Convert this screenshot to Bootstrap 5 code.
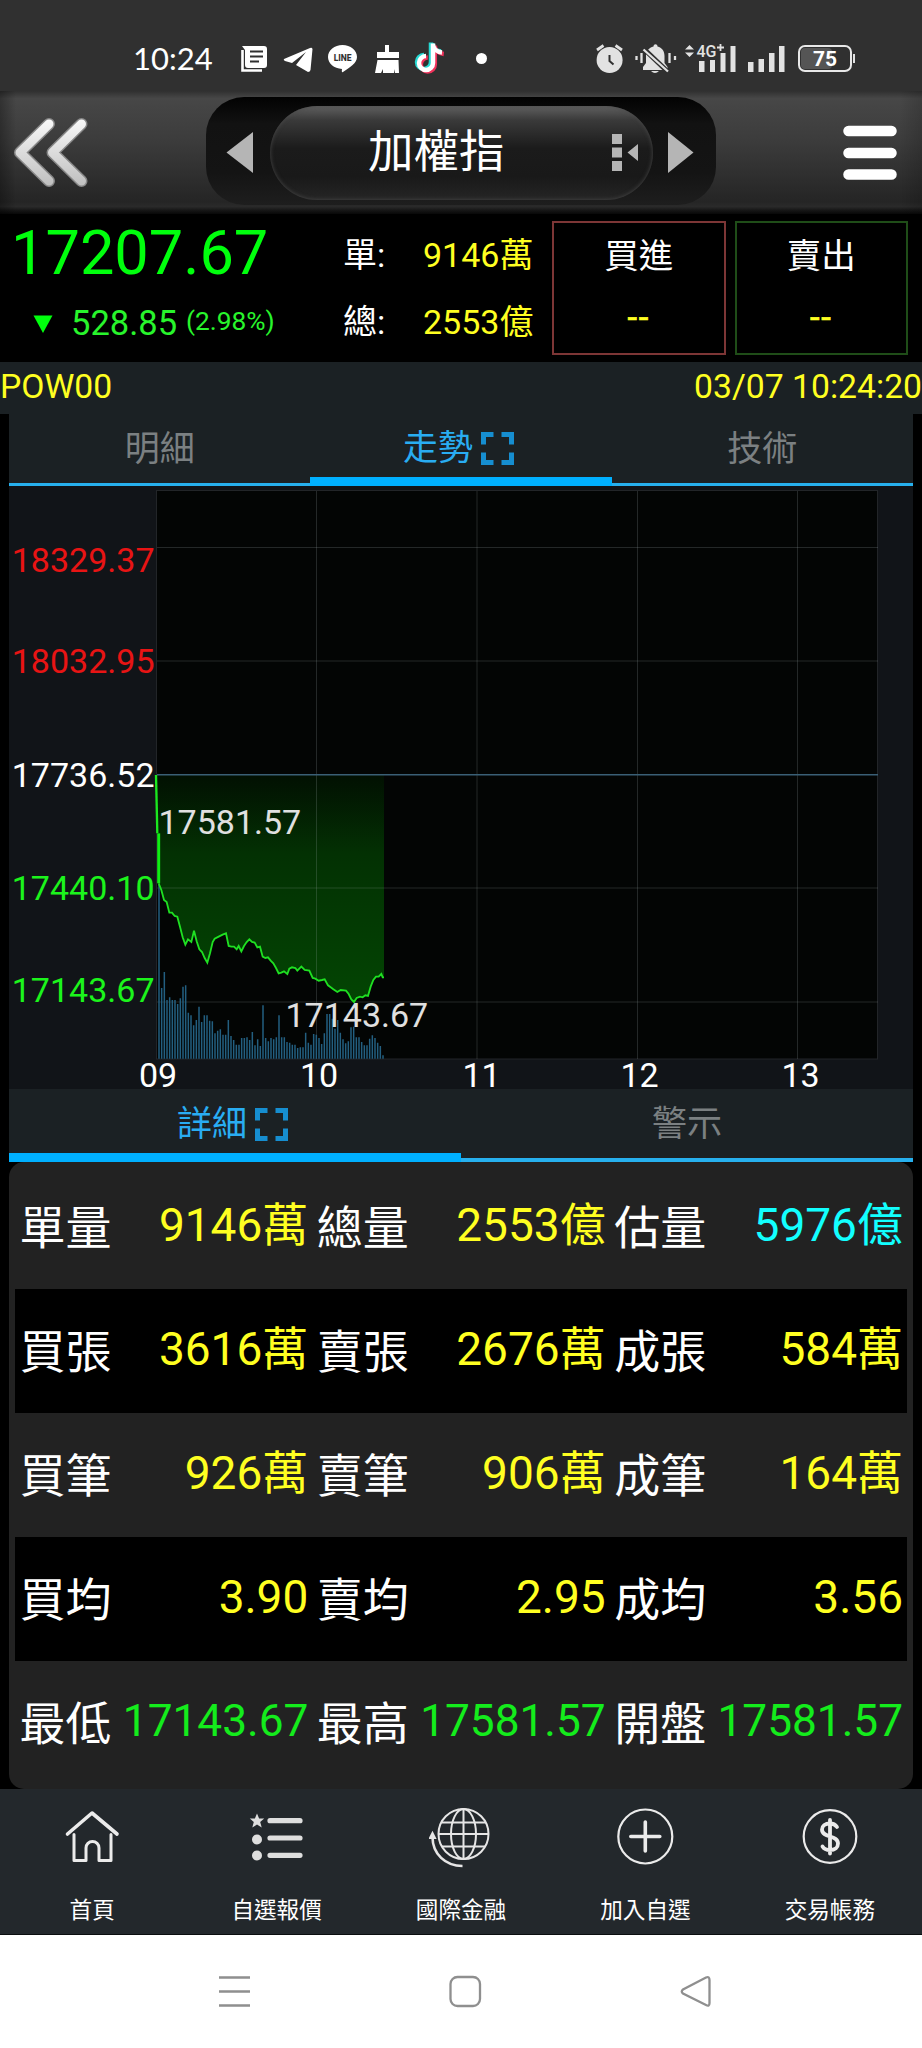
<!DOCTYPE html>
<html lang="zh-Hant">
<head>
<meta charset="utf-8">
<meta name="viewport" content="width=device-width, initial-scale=1">
<title>加權指</title>
<link href="https://cdn.jsdelivr.net/npm/bootstrap@5.3.0/dist/css/bootstrap.min.css" rel="stylesheet">
<style>
body{background:#000;font-family:Roboto,"Noto Sans CJK TC",sans-serif;width:922px;height:2048px;line-height:1;overflow:hidden}
svg{display:block;flex:none}
.yel{color:#ffff21}.grn{color:#00ff0d}.grn2{color:#28f52c}.low-v{color:#14ec1c;font-size:44.2px}.cy{color:#12ffff}
.status{height:91px;background:#303030;padding:38px 0 0 133px}
.clock{font:31px/41px Lato,sans-serif;width:103px;color:#fff}
.topbar{height:123px;background:linear-gradient(90deg,rgba(0,0,0,.3),transparent 16px,transparent 900px,rgba(0,0,0,.15)),linear-gradient(#303030,#474747 6%,#3c3c3c 40%,#252525 90%,#2a2a2a 94%,#161616 97%,#080808);padding:6px 22px 0 12px}
.picker{width:510px;height:108px;margin-left:117px;border-radius:38px;background:linear-gradient(#020202,#121212 25%,#141414 70%,#1e1e1e);padding:9px 21px 0 20px}
.capsule{width:383px;height:94px;border-radius:47px;background:linear-gradient(#606060,#3a3a3a 15%,#1b1b1b 45%,#191919 75%,#252525);box-shadow:inset 0 0 4px #4a4a4a;padding-left:98px;padding-right:12px}
.capsule span{font-size:45.5px;color:#fff}
.quote{height:148px;padding-right:14px}
.q-price{width:343px;padding-left:13px}
.q-big{font-size:61.3px;line-height:72px;padding-top:3px;margin-left:-2px}
.q-row{font-size:34.5px;line-height:44px;padding-top:12px}
.pct{font-size:26.3px;margin-left:9px;margin-top:-4px}
.q-vol{width:209px;font-size:34px}
.q-vol div{height:66.7px;line-height:51px}
.q-vol div span:first-child{width:80px;color:#fff}
.q-box{width:173.5px;height:134px;margin-top:7px;border:2px solid;font-size:34.5px;text-align:center;line-height:50px;padding-top:8px}
.q-box .yel{padding-top:11px;-webkit-text-stroke:.7px;letter-spacing:1.6px}
.q-box.buy{border-color:#7d3636;margin-right:9px}.q-box.sell{border-color:#1f4d18}
.codebar{height:52px;background:#1b2124;font-size:33.7px;line-height:49px}
.pane{margin:0 9px}
.tabs{height:72px;background:#1b2124;border-bottom:3px solid #27b0ee}
.tabs.low{height:73px;border-bottom-width:4px}
.tabs>div{flex:1 1 0;display:flex;align-items:center;justify-content:center;font-size:35px;color:#7b8082;height:100%;padding-top:2px}
.tabs .on{color:#29adf2;height:auto;border-bottom:9px solid #00b0ff;margin-bottom:-3px;padding-top:6px}
.tabs .on svg{margin:0 5px 0 8px}
.tabs.low .on{margin-bottom:-4px}
.chart{background:#111418;height:603px}
.chart svg{overflow:visible}
.chart text{font-size:34px}
.sheet{height:627px;background:#222;border-radius:15px;padding:3px 6px 0}
.sheet .line{height:123.9px;font-size:46px}
.sheet .line:nth-child(even){background:#000}
.sheet .cell{flex:1 1 0;display:flex;justify-content:space-between;padding:27px 4px 0 4.5px;height:100%;line-height:66px}
.cell .lb{color:#fff;padding-top:3px}
.dock{height:146px;background:#23282c;border-bottom:1px solid #0b0e10}
.dock>div{flex:1 1 0;text-align:center;color:#fff;font-size:22.6px;padding-top:16px}
.dock svg{margin:0 auto 31px}
.sysnav{height:113px;background:#fff}
</style>
</head>
<body>
<header class="status d-flex">
  <span class="clock">10:24</span>
  <svg width="40" height="42" viewBox="236 38 40 42"><path d="M242.500 50V70.500H262" fill="none" stroke="#fff" stroke-width="2.600"/><path d="M242 46h22a3 3 0 0 1 3 3v16a3 3 0 0 1-3 3h-16a3 3 0 0 1-3-3V50z" fill="#fff"/><path d="M250 51.500h13M250 56.500h13M250 61.500h9" stroke="#303030" stroke-width="2"/></svg>
  <svg width="44" height="42" viewBox="276 38 44 42"><path d="M284 59Q283 60 285 61L292 63L306 52L296 65L308 72Q310 72 310.500 70L312.500 49Q312 47 310 48Z" fill="#fff"/></svg>
  <svg width="46" height="42" viewBox="320 38 46 42"><path d="M342.500 45c8 0 14.500 5 14.500 12 0 6-7 10.500-14 15-1 .6-1.500 0-1-3-8-.5-14-5.500-14-12 0-7 6.500-12 14.500-12z" fill="#fff"/><text x="342.600" y="60.500" font-family="Roboto" font-weight="800" font-size="8.500" text-anchor="middle" fill="#303030">LINE</text></svg>
  <svg width="42" height="42" viewBox="366 38 42 42"><path d="M385 45h4v7h10v6H377v-6h8zM377.500 60h21l.5 13h-4l-1-4v4h-11v-4l-2 4h-6z" fill="#fff"/></svg>
  <svg width="44" height="42" viewBox="408 38 44 42"><g fill="none" stroke-width="4.500"><path d="M432 43.500V63a7 7 0 1 1-7-7M433 44c0 5 4 8 9 8.500" stroke="#25d9d3" transform="translate(-1 -1)"/><path d="M434 44V63a7 7 0 1 1-7-7M434 44c0 5 4 8 9 8.500" stroke="#f0325b" transform="translate(.8 1.500)"/><path d="M433 43.500V63a7 7 0 1 1-7-7M433 44c0 5 4 8 9 8.500" stroke="#fff"/></g></svg>
  <svg width="138" height="42" viewBox="452 38 138 42"><circle cx="481.500" cy="58.500" r="5.500" fill="#fff"/></svg>
  <svg width="40" height="42" viewBox="590 38 40 42"><circle cx="609.600" cy="60" r="13" fill="#e2e2e2"/><path d="M597 50l6.500-4.500M622 50l-6.500-4.500" stroke="#e2e2e2" stroke-width="2.800"/><path d="M609.500 55v6l4 3.500" stroke="#303030" stroke-width="2" fill="none"/></svg>
  <svg width="52" height="42" viewBox="630 38 52 42"><path d="M643 70v-3l3-4v-7c0-5 3-8.500 7.500-9.500 0-3 4-3 4 0C662 47.500 664.500 51 664.500 56v7l3 4v3zM651 71h8q-4 4-8 0z" fill="#e2e2e2"/><path d="M645 50L668 72" stroke="#303030" stroke-width="5"/><path d="M643.500 49.500L668 71.500M641.500 53v10M669.500 53v10M636.500 56v4M675 56v4" stroke="#e2e2e2" stroke-width="2.300"/></svg>
  <svg width="60" height="42" viewBox="682 38 60 42"><path d="M685 49.500l4.500-4.500 4.500 4.500zM685 52.500l4.500 4.500 4.500-4.500zM699 61h5.500v11h-5.500zM710 60h5v12h-5zM720.500 53h5v19h-5zM730.500 46h5v26h-5z" fill="#e2e2e2"/><text x="696.500" y="57" font-family="Roboto" font-weight="500" font-size="16.500" textLength="20" lengthAdjust="spacingAndGlyphs" fill="#e2e2e2">4G</text><path d="M717 47.500h7M720.500 44v7" stroke="#e2e2e2" stroke-width="1.800"/></svg>
  <svg width="50" height="42" viewBox="742 38 50 42"><path d="M748 62h5.500v10H748zM758.500 59h5.500v13h-5.500zM769 53h5.500v19H769zM779 46h5.500v26H779z" fill="#e2e2e2"/></svg>
  <svg width="70" height="42" viewBox="792 38 70 42"><rect x="801" y="48" width="31" height="21" rx="4" fill="#555"/><rect x="799" y="46" width="52" height="25" rx="6" fill="none" stroke="#e8e8e8" stroke-width="2"/><path d="M854 54v9" stroke="#e2e2e2" stroke-width="2"/><text x="825" y="65.500" font-family="Roboto" font-weight="700" font-size="21" text-anchor="middle" fill="#fff">75</text></svg>
</header>

<nav class="topbar d-flex">
  <svg width="77" height="112" viewBox="12 97 77 112"><defs><linearGradient id="mt" x1="0" y1="118" x2="0" y2="188" gradientUnits="userSpaceOnUse"><stop stop-color="#fafafa"/><stop offset="1" stop-color="#bdbdbd"/></linearGradient></defs><g fill="none" stroke-linecap="round" stroke-linejoin="round"><path d="M49 124L20 152.500L49 181M81.500 124L52.500 152.500L81.500 181" stroke="#888" stroke-width="12"/><path d="M49 124L20 152.500L49 181M81.500 124L52.500 152.500L81.500 181" stroke="url(#mt)" stroke-width="9"/></g></svg>
  <div class="picker d-flex">
    <svg width="44" height="90" viewBox="225 106 44 90"><path d="M225.500 152.500L252 132v41z" fill="#b5b5b5"/></svg>
    <div class="capsule d-flex align-items-center justify-content-between"><span>加權指</span>
      <svg width="30" height="40" viewBox="611 132 30 40"><path d="M612 133h10v10h-10zM612 146.500h10v10h-10zM612 160h10v10h-10zM627.500 151.500L638 143v17z" fill="#b5b5b5"/></svg></div>
    <svg width="41" height="90" viewBox="652 106 41 90"><path d="M692.500 152.500L667 132v41z" fill="#b5b5b5"/></svg>
  </div>
  <svg class="ms-auto" width="60" height="112" viewBox="840 97 60 112"><path d="M848.500 131h43M848.500 153h43M848.500 174.500h43" stroke="#fff" stroke-width="10.500" stroke-linecap="round"/></svg>
</nav>

<section class="quote d-flex">
  <div class="q-price">
    <div class="q-big grn">17207.67</div>
    <div class="q-row grn2 d-flex align-items-center"><svg width="58" height="40" viewBox="13 301 58 40"><path d="M33.500 313.500h19L43 331z" fill="#00ff0d"/></svg><span>528.85</span><span class="pct">(2.98%)</span></div>
  </div>
  <div class="q-vol pt-3"><div class="d-flex"><span>單:</span><span class="yel">9146萬</span></div><div class="d-flex"><span>總:</span><span class="yel">2553億</span></div></div>
  <div class="q-box buy"><div class="text-white">買進</div><div class="yel">--</div></div>
  <div class="q-box sell"><div class="text-white">賣出</div><div class="yel">--</div></div>
</section>

<div class="codebar yel d-flex justify-content-between"><span>POW00</span><span>03/07 10:24:20</span></div>

<main class="pane">
  <div class="tabs d-flex">
    <div>明細</div>
    <div class="on"><span>走勢</span><svg width="33" height="33" viewBox="0 0 33 33"><path d="M2.500 12.500V2.500h10M20.500 2.500h10v10M30.500 20.500v10h-10M12.500 30.500h-10v-10" fill="none" stroke="#168ed0" stroke-width="5"/></svg></div>
    <div>技術</div>
  </div>
  <div class="chart">
    <svg width="904" height="603" viewBox="9 486 904 603">
      <defs><linearGradient id="ar" x1="0" y1="75" x2="0" y2="756" gradientUnits="userSpaceOnUse"><stop stop-color="#021002"/><stop offset=".35" stop-color="#033103"/><stop offset="1" stop-color="#034503"/></linearGradient></defs>
      <rect x="156.500" y="490.500" width="721" height="568.500" fill="#030504" stroke="#222528"/>
      <g transform="translate(0 750) scale(.333333)">
        <path d="M468 75L476 250V400L484 420L492 450L500 456L508 488H516L524 498L532 500L540 530L548 562L556 584L564 568L574 576L582 542L590 574L598 598L606 606L614 624L622 638L630 610L638 576L644 566L656 560L668 554L678 550L686 588L694 590H702L710 598L716 588L724 604L732 588L740 576L748 568L756 576L764 578L772 592L780 590L788 620L796 624L804 622L812 632L820 640L828 654L836 670L844 668L852 664L862 672L868 656L876 652L886 654L892 662L904 650L914 660L928 662L938 684L946 686L956 692L966 690L974 688L984 706L992 712L1000 718L1012 726L1022 720L1038 722L1046 732L1054 748L1062 756L1070 744L1080 740L1088 742L1096 736L1104 738L1112 710L1120 690L1128 680H1136L1144 672L1148 682H1152V75Z" fill="url(#ar)"/>
      </g>
      <path d="M157 547.500H878M157 661H878M157 888H878M157 1002H878M316.500 491V1059M477 491V1059M637.500 491V1059M797.500 491V1059" stroke="#9aa" stroke-opacity=".22"/>
      <path d="M157 774.700H878" stroke="#3a5f75" stroke-width="1.600"/>
      <g transform="translate(0 750) scale(.333333)" fill="none">
        <path id="vol" stroke="#235f80" stroke-width="4.500"/>
        <path d="M468 75L472 250" stroke="#1be81f" stroke-width="7"/><path d="M476 250V400" stroke="#10ee14" stroke-width="9"/>
        <path d="M476 400L484 420L492 450L500 456L508 488H516L524 498L532 500L540 530L548 562L556 584L564 568L574 576L582 542L590 574L598 598L606 606L614 624L622 638L630 610L638 576L644 566L656 560L668 554L678 550L686 588L694 590H702L710 598L716 588L724 604L732 588L740 576L748 568L756 576L764 578L772 592L780 590L788 620L796 624L804 622L812 632L820 640L828 654L836 670L844 668L852 664L862 672L868 656L876 652L886 654L892 662L904 650L914 660L928 662L938 684L946 686L956 692L966 690L974 688L984 706L992 712L1000 718L1012 726L1022 720L1038 722L1046 732L1054 748L1062 756L1070 744L1080 740L1088 742L1096 736L1104 738L1112 710L1120 690L1128 680H1136L1144 672L1148 682H1152" stroke="#1fe022" stroke-width="5.500"/>
      </g>
      <g text-anchor="end"><g fill="#e81414"><text x="154.500" y="572.300">18329.37</text><text x="154.500" y="672.700">18032.95</text></g><text x="154.500" y="786.700" fill="#fff">17736.52</text><g fill="#1cf41c"><text x="154.500" y="900">17440.10</text><text x="154.500" y="1001.500">17143.67</text></g></g>
      <g fill="#e0e0e0"><text x="158.500" y="834">17581.57</text><text x="285.500" y="1027">17143.67</text></g>
      <g fill="#fff" text-anchor="middle"><text x="158" y="1086.700">09</text><text x="319" y="1086.700">10</text><text x="481.500" y="1086.700">11</text><text x="639.500" y="1086.700">12</text><text x="800.500" y="1086.700">13</text></g>
    </svg>
  </div>
  <div class="tabs low d-flex">
    <div class="on"><span>詳細</span><svg width="33" height="33" viewBox="0 0 33 33"><path d="M2.500 12.500V2.500h10M20.500 2.500h10v10M30.500 20.500v10h-10M12.500 30.500h-10v-10" fill="none" stroke="#168ed0" stroke-width="5"/></svg></div>
    <div>警示</div>
  </div>
  <div class="sheet">
    <div class="line d-flex"><div class="cell"><span class="lb">單量</span><span class="yel">9146萬</span></div><div class="cell"><span class="lb">總量</span><span class="yel">2553億</span></div><div class="cell"><span class="lb">估量</span><span class="cy">5976億</span></div></div>
    <div class="line d-flex"><div class="cell"><span class="lb">買張</span><span class="yel">3616萬</span></div><div class="cell"><span class="lb">賣張</span><span class="yel">2676萬</span></div><div class="cell"><span class="lb">成張</span><span class="yel">584萬</span></div></div>
    <div class="line d-flex"><div class="cell"><span class="lb">買筆</span><span class="yel">926萬</span></div><div class="cell"><span class="lb">賣筆</span><span class="yel">906萬</span></div><div class="cell"><span class="lb">成筆</span><span class="yel">164萬</span></div></div>
    <div class="line d-flex"><div class="cell"><span class="lb">買均</span><span class="yel">3.90</span></div><div class="cell"><span class="lb">賣均</span><span class="yel">2.95</span></div><div class="cell"><span class="lb">成均</span><span class="yel">3.56</span></div></div>
    <div class="line d-flex"><div class="cell"><span class="lb">最低</span><span class="low-v">17143.67</span></div><div class="cell"><span class="lb">最高</span><span class="low-v">17581.57</span></div><div class="cell"><span class="lb">開盤</span><span class="low-v">17581.57</span></div></div>
  </div>
</main>

<nav class="dock d-flex">
  <div><svg width="64" height="64" viewBox="60 1805 64 64" fill="none" stroke="#ebebeb" stroke-width="3" stroke-linejoin="round" stroke-linecap="round"><path d="M67.500 1834L92 1813L117 1834" stroke-width="3.600"/><path d="M74 1834.500V1860.500H86V1848a6.500 6.500 0 0 1 13 0V1860.500H111V1834.500"/></svg>首頁</div>
  <div><svg width="64" height="64" viewBox="245 1805 64 64"><g fill="#dedede"><path d="M257 1813.500l2.100 5h5.100l-4 3.500 1.500 5.500-4.700-3-4.700 3 1.500-5.500-4-3.500h5.100z"/><circle cx="257" cy="1839.500" r="5"/><circle cx="257" cy="1855.500" r="5"/></g><path d="M270 1820.700h30M270 1838h30M270 1855.300h30" stroke="#dedede" stroke-width="5.200" stroke-linecap="round"/></svg>自選報價</div>
  <div><svg width="64" height="64" viewBox="429 1805 64 64" fill="none" stroke="#e6e6e6" stroke-width="2"><circle cx="463.500" cy="1834" r="25"/><ellipse cx="463.500" cy="1834" rx="12.500" ry="25"/><path d="M463.500 1809v50M438.500 1834h50M442 1822.500h43M442 1846.500h43"/><path d="M432.500 1837c0 17 13 29 30 29" stroke-width="2.600"/><path d="M430 1838l2.500-5 2.500 5z" fill="#e6e6e6"/></svg>國際金融</div>
  <div><svg width="64" height="64" viewBox="613 1805 64 64" fill="none" stroke="#ebebeb" stroke-width="2.200"><circle cx="645.300" cy="1836.500" r="27"/><path d="M645.300 1822v29M630.800 1836.500h29" stroke-width="3.600" stroke-linecap="round"/></svg>加入自選</div>
  <div><svg width="64" height="64" viewBox="798 1805 64 64" fill="none" stroke="#ebebeb" stroke-width="2.200"><circle cx="830" cy="1836.500" r="26.300"/><path d="M830 1820v33.500M837 1827c-2-3-5-3.500-7-3.500-5 0-8 2.500-8 6 0 9 16 5 16 14 0 4-3 6.500-8 6.500-3 0-6-1-7.500-3.500" stroke-width="3.800" stroke-linecap="round"/></svg>交易帳務</div>
</nav>
<footer class="sysnav">
  <svg width="922" height="113" viewBox="0 1935 922 113" fill="none" stroke="#8f8f8f" stroke-width="2.300"><path d="M219 1977.500h31M219 1991.500h31M219 2005.500h31"/><rect x="450.500" y="1977" width="29.500" height="29" rx="7"/><path d="M706 1977.500Q709.500 1976 709.500 1980V2003Q709.500 2007 706 2005L683 1993.500Q680.500 1991.500 683 1989.500Z"/></svg>
</footer>
<script src="https://cdn.jsdelivr.net/npm/bootstrap@5.3.0/dist/js/bootstrap.bundle.min.js"></script>
<script>
// Volume per minute: one thin bar every 8 units, measured as its top edge
const tops=[405,714,666,750,742,750,750,762,745,710,706,788,796,826,810,770,816,796,796,812,814,850,842,838,854,854,810,858,870,884,884,864,864,862,870,846,886,868,888,766,864,874,864,868,862,796,862,862,876,878,884,884,894,892,892,848,878,884,852,854,864,882,850,792,792,806,836,810,848,868,880,874,832,830,862,862,876,886,886,866,856,864,878,888,916];
document.getElementById('vol').setAttribute('d',tops.map((t,i)=>`M${477+8*i} 926V${t}`).join(''));
</script>
</body>
</html>
